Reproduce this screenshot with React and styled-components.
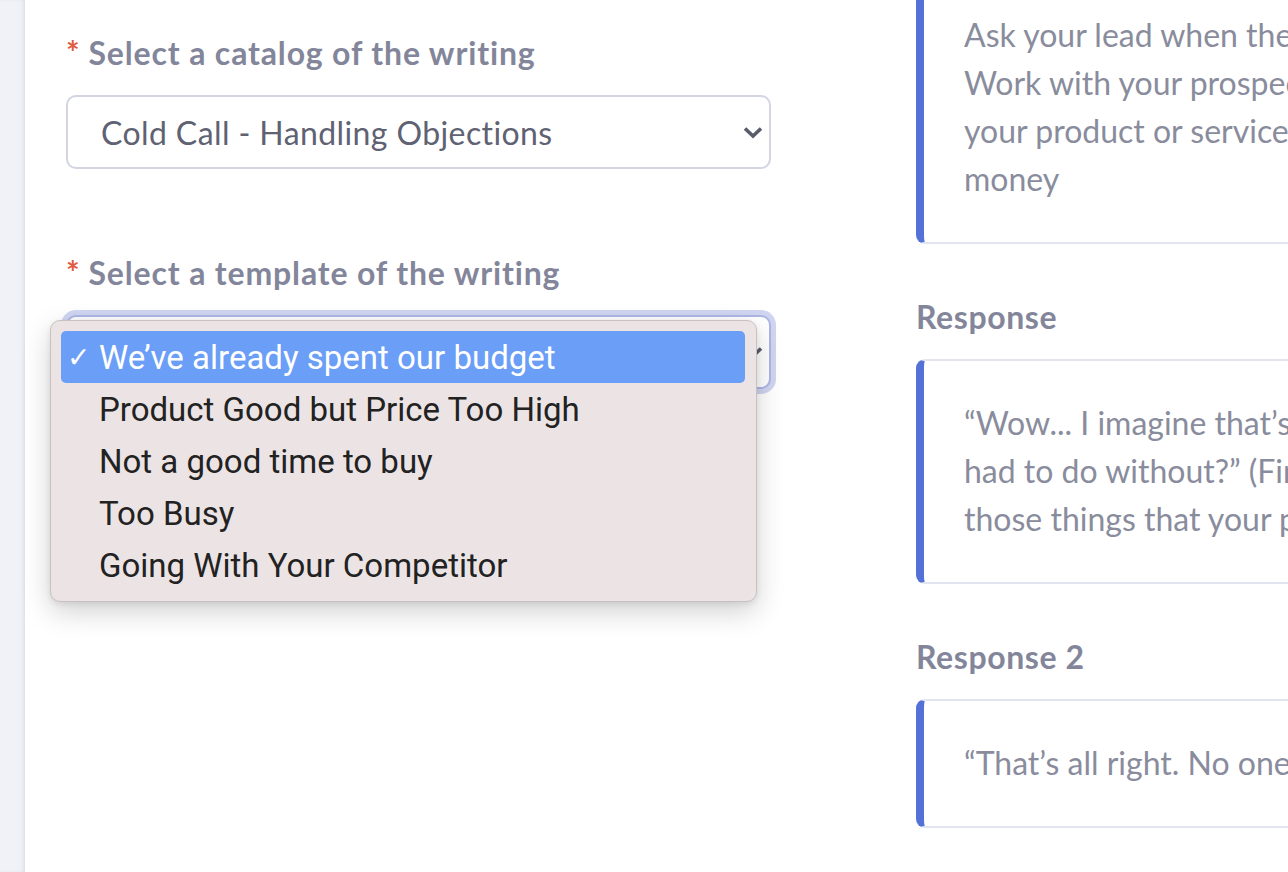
import React from 'react'
import styled, { createGlobalStyle } from 'styled-components'

const Global = createGlobalStyle`
  html, body {
    margin: 0;
    padding: 0;
    background: #ffffff;
    overflow: hidden;
  }
  body {
    font-family: "Lato", "Open Sans", sans-serif;
  }
`

const Page = styled.div`
  display: flex;
  width: 1288px;
  height: 872px;
  overflow: hidden;
`

const Sidebar = styled.div`
  width: 25px;
  flex-shrink: 0;
  background: #f1f2f7;
  box-shadow: inset -3px 0 4px -2px rgba(160, 165, 190, 0.35);
`

const Main = styled.main`
  flex: 1;
  display: flex;
  gap: 145px;
  padding-left: 41px;
  padding-top: 32px;
`

const LeftCol = styled.div`
  width: 705px;
  flex-shrink: 0;
  display: flex;
  flex-direction: column;
  gap: 83px;
`

const Field = styled.div`
  display: flex;
  flex-direction: column;
  gap: 21px;
`

const Label = styled.div`
  font-size: 32px;
  line-height: 42px;
  font-weight: 700;
  color: #83869a;
  letter-spacing: 0.85px;
  white-space: nowrap;

  span {
    color: #e05a3f;
    margin-right: 8px;
  }
`

const SelectBox = styled.div`
  position: relative;
  height: 74px;
  box-sizing: border-box;
  border: 2px solid ${p => (p.focused ? '#aeb6e6' : '#d3d5e3')};
  border-radius: 10px;
  background: #fff;
  display: flex;
  align-items: center;
  padding: 0 6px 0 33px;
  font-size: 32px;
  color: #5f6272;
  box-shadow: ${p => (p.focused ? '0 0 0 5px rgba(120, 135, 215, 0.35)' : 'none')};
`

const Value = styled.div`
  flex: 1;
  white-space: nowrap;
  letter-spacing: 0.4px;
`

const Chevron = styled.svg`
  width: 20px;
  height: 13px;
`

const Menu = styled.ul`
  position: absolute;
  left: -18px;
  top: 3px;
  width: 707px;
  margin: 0;
  padding: 10px 11px 10px 10px;
  box-sizing: border-box;
  list-style: none;
  background: #ece4e4;
  border: 1px solid #c7c1c1;
  border-radius: 10px;
  box-shadow: 0 10px 28px rgba(0, 0, 0, 0.18), 0 2px 6px rgba(0, 0, 0, 0.08);
  font-family: "Roboto", "Liberation Sans", sans-serif;
  z-index: 5;
`

const Option = styled.li`
  height: 52px;
  display: flex;
  align-items: center;
  border-radius: 5px;
  font-size: 33px;
  color: ${p => (p.selected ? '#ffffff' : '#222222')};
  background: ${p => (p.selected ? '#6a9ef7' : 'transparent')};
  white-space: nowrap;
`

const Check = styled.span`
  width: 38px;
  padding-left: 6px;
  box-sizing: border-box;
  font-size: 28px;
  font-family: "DejaVu Sans", sans-serif;
`

const RightCol = styled.div`
  width: 640px;
  flex-shrink: 0;
  margin-top: -61px;
  display: flex;
  flex-direction: column;
`

const Heading = styled.div`
  font-size: 32px;
  line-height: 42px;
  font-weight: 700;
  color: #83869a;
  letter-spacing: 0.6px;
  margin: 52px 0 21px;
`

const Card = styled.div`
  border: 2px solid #e2e4ef;
  border-left: 8px solid #5471d8;
  border-radius: 9px;
  padding: 38px 40px 39px 40px;
  font-size: 32px;
  line-height: 48px;
  color: #898c9c;
  white-space: nowrap;
`

const options = [
  "We’ve already spent our budget",
  'Product Good but Price Too High',
  'Not a good time to buy',
  'Too Busy',
  'Going With Your Competitor',
]

const ArrowDown = () => (
  <Chevron viewBox="0 0 20 13">
    <path d="M2 2.5 L10 10 L18 2.5" fill="none" stroke="#5a5c6b" strokeWidth="3.6" />
  </Chevron>
)

export default function App() {
  return (
    <Page>
      <Global />
      <Sidebar />
      <Main>
        <LeftCol>
          <Field>
            <Label><span>*</span>Select a catalog of the writing</Label>
            <SelectBox>
              <Value>Cold Call - Handling Objections</Value>
              <ArrowDown />
            </SelectBox>
          </Field>
          <Field>
            <Label><span>*</span>Select a template of the writing</Label>
            <SelectBox focused>
              <Value>We’ve already spent our budget</Value>
              <ArrowDown />
              <Menu>
                {options.map((o, i) => (
                  <Option key={o} selected={i === 0}>
                    <Check>{i === 0 ? '✓' : ''}</Check>
                    {o}
                  </Option>
                ))}
              </Menu>
            </SelectBox>
          </Field>
        </LeftCol>
        <RightCol>
          <Card>
            Ask your lead when they expect to have funds available.<br />
            Work with your prospect to find a way to fit<br />
            your product or service into the budget or save them<br />
            money
          </Card>
          <Heading>Response</Heading>
          <Card>
            “Wow... I imagine that’s tough. What other things have you<br />
            had to do without?” (Find out what they are missing,<br />
            those things that your product can help with.)
          </Card>
          <Heading>Response 2</Heading>
          <Card>
            “That’s all right. No one ever has the budget until they need it.”
          </Card>
        </RightCol>
      </Main>
    </Page>
  )
}
